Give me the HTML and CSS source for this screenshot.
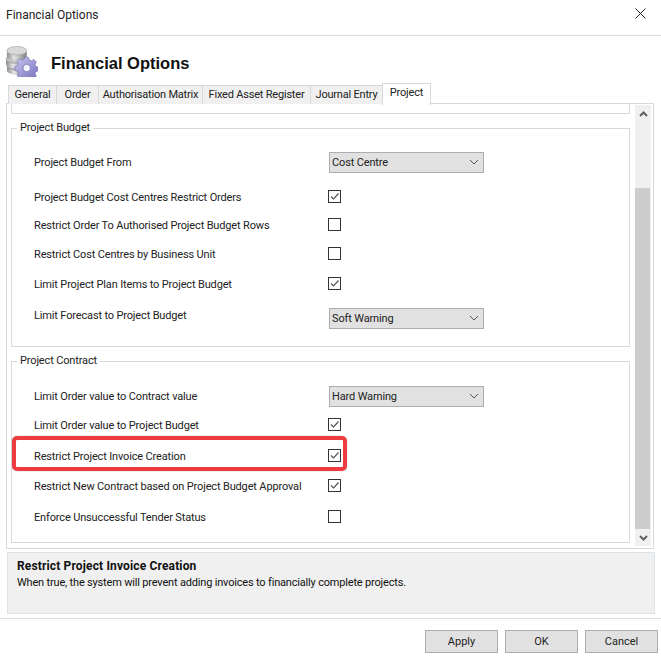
FILE: index.html
```html
<!DOCTYPE html>
<html lang="en">
<head>
    <meta charset="UTF-8">
    <title>Financial Options</title>
    <link rel="stylesheet" href="styles.css">
</head>
<body>
    <div class="dialog">
        <div class="titlebar">
            <span>Financial Options</span>
            <svg class="close" width="11" height="11" viewBox="0 0 11 11"><path d="M.5.5l10 10M10.500.5l-10 10" stroke="#222" fill="none"/></svg>
        </div>

        <header class="page-head">
            <svg class="page-icon" width="32" height="32" viewBox="0 0 34 34">
                <defs>
                    <linearGradient id="coin" x1="0" x2="1" y1="0" y2="0">
                        <stop offset="0" stop-color="#8d8d8d"/>
                        <stop offset=".35" stop-color="#e4e4e4"/>
                        <stop offset="1" stop-color="#7f7f7f"/>
                    </linearGradient>
                    <linearGradient id="cog" x1="0" x2="1" y1="0" y2="1">
                        <stop offset="0" stop-color="#c9c6ee"/>
                        <stop offset="1" stop-color="#7670bd"/>
                    </linearGradient>
                </defs>
                <path d="M1 22v5c0 2.500 5 4.500 10.500 4.500S22 29.500 22 27v-5z" fill="url(#coin)"/>
                <ellipse cx="11.500" cy="22" rx="10.500" ry="4.500" fill="#b9b9b9" stroke="#8a8a8a" stroke-width=".6"/>
                <path d="M0 15v5c0 2.500 5 4.500 10.500 4.500S21 22.500 21 20v-5z" fill="url(#coin)"/>
                <ellipse cx="10.500" cy="15" rx="10.500" ry="4.500" fill="#c4c4c4" stroke="#8a8a8a" stroke-width=".6"/>
                <path d="M1 7v5c0 2.500 5 4.500 10.500 4.500S22 14.500 22 12V7z" fill="url(#coin)"/>
                <ellipse cx="11.500" cy="6" rx="10.500" ry="4.500" fill="#d9d9d9" stroke="#9a9a9a" stroke-width=".6"/>
                <path d="M20 13h4l.7 2.800 2.300 1 2.500-1.500 2.800 2.800-1.500 2.500 1 2.300 2.700.7v4l-2.700.7-1 2.300 1.500 2.500-2.800 2.400-2.500-1.400-2.300 1-.7 1.400h-4l-.7-1.700-2.300-1-2.500 1.400-2.800-2.700 1.500-2.500-1-2.300-2.700-.7v-4l2.700-.7 1-2.300-1.500-2.500 2.800-2.800 2.500 1.500 2.300-1z" fill="url(#cog)" stroke="#6f6ab0" stroke-width=".6"/>
                <circle cx="22" cy="24.500" r="4" fill="#f3f3fb" stroke="#6f6ab0" stroke-width=".8"/>
            </svg>
            <h1>Financial Options</h1>
        </header>

        <nav class="tabs">
            <div class="tab">General</div>
            <div class="tab">Order</div>
            <div class="tab">Authorisation Matrix</div>
            <div class="tab">Fixed Asset Register</div>
            <div class="tab">Journal Entry</div>
            <div class="tab active">Project</div>
        </nav>

        <div class="panel">
            <div class="options">
                <div class="group-stub"></div>

                <fieldset class="group budget">
                    <legend>Project Budget</legend>
                    <div class="row">
                        <label>Project Budget From</label>
                        <div class="select"><span>Cost Centre</span><svg width="10" height="6" viewBox="0 0 10 6"><path d="M1 1l4 4 4-4" stroke="#555" fill="none"/></svg></div>
                    </div>
                    <div class="row">
                        <label>Project Budget Cost Centres Restrict Orders</label>
                        <span class="check on"><svg width="11" height="11" viewBox="0 0 11 11"><path d="M2 5.500l2.500 2.500L9.500 2.500" stroke="#555" stroke-width="1.200" fill="none"/></svg></span>
                    </div>
                    <div class="row">
                        <label>Restrict Order To Authorised Project Budget Rows</label>
                        <span class="check"></span>
                    </div>
                    <div class="row">
                        <label>Restrict Cost Centres by Business Unit</label>
                        <span class="check"></span>
                    </div>
                    <div class="row">
                        <label>Limit Project Plan Items to Project Budget</label>
                        <span class="check on"><svg width="11" height="11" viewBox="0 0 11 11"><path d="M2 5.500l2.500 2.500L9.500 2.500" stroke="#555" stroke-width="1.200" fill="none"/></svg></span>
                    </div>
                    <div class="row">
                        <label>Limit Forecast to Project Budget</label>
                        <div class="select"><span>Soft Warning</span><svg width="10" height="6" viewBox="0 0 10 6"><path d="M1 1l4 4 4-4" stroke="#555" fill="none"/></svg></div>
                    </div>
                </fieldset>

                <fieldset class="group contract">
                    <legend>Project Contract</legend>
                    <div class="row">
                        <label>Limit Order value to Contract value</label>
                        <div class="select"><span>Hard Warning</span><svg width="10" height="6" viewBox="0 0 10 6"><path d="M1 1l4 4 4-4" stroke="#555" fill="none"/></svg></div>
                    </div>
                    <div class="row">
                        <label>Limit Order value to Project Budget</label>
                        <span class="check on"><svg width="11" height="11" viewBox="0 0 11 11"><path d="M2 5.500l2.500 2.500L9.500 2.500" stroke="#555" stroke-width="1.200" fill="none"/></svg></span>
                    </div>
                    <div class="row highlighted">
                        <label>Restrict Project Invoice Creation</label>
                        <span class="check on"><svg width="11" height="11" viewBox="0 0 11 11"><path d="M2 5.500l2.500 2.500L9.500 2.500" stroke="#555" stroke-width="1.200" fill="none"/></svg></span>
                        <div class="callout"></div>
                    </div>
                    <div class="row">
                        <label>Restrict New Contract based on Project Budget Approval</label>
                        <span class="check on"><svg width="11" height="11" viewBox="0 0 11 11"><path d="M2 5.500l2.500 2.500L9.500 2.500" stroke="#555" stroke-width="1.200" fill="none"/></svg></span>
                    </div>
                    <div class="row">
                        <label>Enforce Unsuccessful Tender Status</label>
                        <span class="check"></span>
                    </div>
                </fieldset>
            </div>

            <div class="scrollbar">
                <div class="arrow"><svg width="9" height="6" viewBox="0 0 9 6"><path d="M1 5l3.500-3.500L8 5" stroke="#606060" stroke-width="2" fill="none"/></svg></div>
                <div class="track"><div class="thumb"></div></div>
                <div class="arrow"><svg width="9" height="6" viewBox="0 0 9 6"><path d="M1 1l3.500 3.500L8 1" stroke="#606060" stroke-width="2" fill="none"/></svg></div>
            </div>
        </div>

        <section class="description">
            <h2>Restrict Project Invoice Creation</h2>
            <p>When true, the system will prevent adding invoices to financially complete projects.</p>
        </section>

        <footer class="buttons">
            <button>Apply</button>
            <button>OK</button>
            <button>Cancel</button>
        </footer>
    </div>
</body>
</html>
```

FILE: styles.css
```css
html, body {
    margin: 0;
    padding: 0;
    background-color: white;
}
body {
    font-family: Roboto, "Open Sans", sans-serif;
    font-size: 11px;
    letter-spacing: -0.15px;
    color: #222;
}
.dialog {
    width: 661px;
    height: 659px;
    overflow: hidden;
}
.titlebar {
    height: 35px;
    border-bottom: 1px solid #dcdcdc;
    display: flex;
    align-items: center;
    justify-content: space-between;
    padding: 0 15px 0 6px;
    font-size: 12px;
    letter-spacing: 0;
}
.titlebar span {
    margin-top: -6px;
}
.close {
    margin-top: -8px;
}
.page-head {
    height: 47px;
    display: flex;
    align-items: center;
    padding-left: 6px;
}
.page-icon {
    margin-top: 3px;
    margin-right: 13px;
}
h1 {
    margin: 8px 0 0;
    font-family: "Liberation Sans", Arial, sans-serif;
    font-size: 16.500px;
    font-weight: bold;
    letter-spacing: 0;
    color: #111;
}
.tabs {
    height: 20px;
    display: grid;
    grid-template-columns: 49px 42px 104px 108px 72px 48px;
    align-items: end;
    padding-left: 8px;
    position: relative;
    z-index: 1;
    letter-spacing: -0.2px;
}
.tab {
    height: 18px;
    line-height: 18px;
    text-align: center;
    border: 1px solid #d9d9d9;
    border-bottom: none;
    border-left-width: 0;
    background-color: #f0f0f0;
}
.tab:first-child {
    border-left-width: 1px;
}
.tab.active {
    height: 21px;
    line-height: 17px;
    margin-bottom: -1px;
    background-color: white;
    border-left-width: 1px;
    margin-left: -1px;
}
.panel {
    margin-left: 6px;
    width: 648px;
    height: 446px;
    box-sizing: border-box;
    border: 1px solid #d9d9d9;
    display: flex;
}
.options {
    width: 619px;
    padding-left: 4px;
}
.group-stub {
    height: 9px;
    border: 1px solid #d9d9d9;
    border-top: none;
}
.group {
    margin: 0;
    padding: 0 0 0 22px;
    border: 1px solid #d9d9d9;
    min-width: 0;
}
.group legend {
    margin-left: -17px;
    padding: 0 3px;
    line-height: 16px;
    font-size: 11px;
}
.budget {
    margin-top: 6px;
    padding-top: 12px;
    padding-bottom: 17px;
}
.contract {
    margin-top: 6px;
    padding-top: 13px;
    padding-bottom: 11px;
}
.row {
    height: 28px;
    display: grid;
    grid-template-columns: 295px auto;
    align-items: center;
    justify-items: start;
    position: relative;
}
.budget .row:nth-of-type(2) { margin-top: 7px; }
.budget .row:nth-of-type(4) { margin-top: 1px; }
.budget .row:nth-of-type(5) { margin-top: 2px; }
.budget .row:nth-of-type(6) { margin-top: 3px; }
.budget .row:nth-of-type(6) .select { margin-top: 6px; }
.contract .row:nth-of-type(2) { margin-top: 1px; }
.contract .row:nth-of-type(3) { margin-top: 3px; }
.contract .row:nth-of-type(4) { margin-top: 2px; }
.contract .row:nth-of-type(5) { margin-top: 3px; }
.select {
    width: 155px;
    height: 21px;
    box-sizing: border-box;
    border: 1px solid #adadad;
    background-color: #e1e1e1;
    display: flex;
    align-items: center;
    justify-content: space-between;
    padding: 0 4px 0 2px;
}
.select span {
    margin-top: 1px;
}
.check {
    width: 13px;
    height: 13px;
    box-sizing: border-box;
    border: 1px solid #333;
    margin-left: -1px;
    margin-bottom: 1px;
    background-color: white;
    display: block;
    position: relative;
    z-index: 2;
}
.check svg {
    display: block;
}
.callout {
    position: absolute;
    left: -22px;
    top: -6px;
    width: 335px;
    height: 35px;
    box-sizing: border-box;
    border: 4px solid #ee3b42;
    border-radius: 5px;
    box-shadow: 0 0 1px #777;
    pointer-events: none;
}
.scrollbar {
    margin: 1px 0 2px 5px;
    width: 16px;
    background-color: #f0f0f0;
    display: flex;
    flex-direction: column;
}
.arrow {
    height: 17px;
    display: flex;
    align-items: center;
    justify-content: center;
}
.track {
    flex: 1;
    padding-top: 66px;
    display: flex;
}
.thumb {
    flex: 1;
    background-color: #cdcdcd;
    margin-right: 1px;
}
.description {
    margin: 3px 0 0 7px;
    width: 648px;
    height: 62px;
    box-sizing: border-box;
    border: 1px solid #dce4ea;
    background-color: #f0f0f0;
    padding: 6px 9px;
}
.description h2 {
    margin: 0;
    font-size: 12px;
    line-height: 15px;
    font-weight: bold;
    letter-spacing: 0.15px;
    color: #111;
}
.description p {
    margin: 2px 0 0;
    line-height: 14px;
    letter-spacing: -0.18px;
    color: #111;
}
.buttons {
    margin-top: 4px;
    border-top: 1px solid #dcdcdc;
    padding: 11px 3px 0 0;
    display: flex;
    justify-content: flex-end;
    gap: 7px;
}
.buttons button {
    width: 73px;
    height: 23px;
    border: 1px solid #adadad;
    background-color: #e1e1e1;
    font: inherit;
    color: #222;
    padding: 0;
}
```
